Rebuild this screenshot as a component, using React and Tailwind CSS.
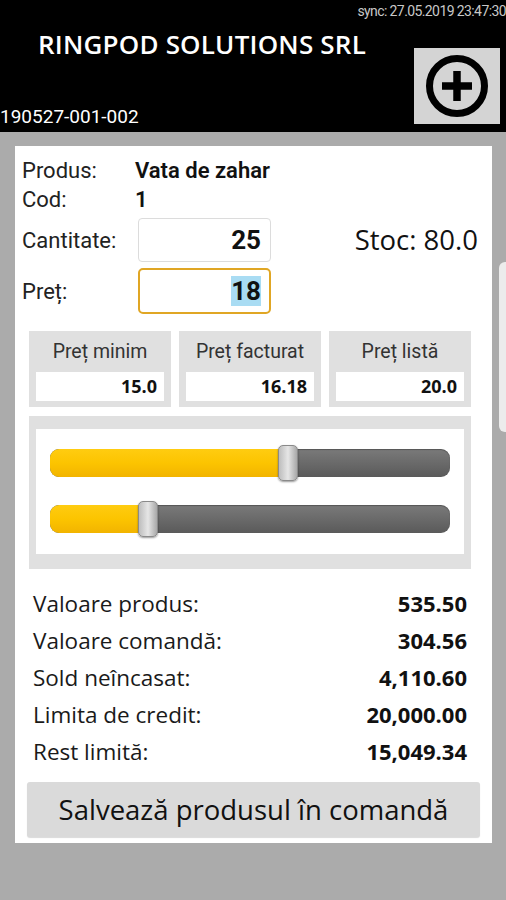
import React from "react";

const roboto = { fontFamily: "Roboto, 'Liberation Sans', sans-serif" };
const open = { fontFamily: "'Open Sans', sans-serif" };

function Slider({ pct }) {
  return (
    <div className="relative h-[28px] w-[400px]">
      <div className="absolute inset-0 rounded-[9px] bg-gradient-to-b from-[#7a7a7a] via-[#6a6a6a] to-[#5a5a5a] shadow-[inset_0_1px_1px_rgba(0,0,0,0.3)]" />
      <div
        className="absolute left-0 top-0 bottom-0 rounded-l-[9px] bg-gradient-to-b from-[#ffcc10] via-[#fcc400] to-[#f2b400]"
        style={{ width: `${pct}px` }}
      />
      <div
        className="absolute top-[-4px] h-[36px] w-[20px] rounded-[5px] border border-[#8a8a8a] bg-gradient-to-r from-[#bdbdbd] via-[#e6e6e6] to-[#a8a8a8] shadow-[0_1px_2px_rgba(0,0,0,0.4)]"
        style={{ left: `${pct - 10}px` }}
      />
    </div>
  );
}

function PriceBox({ label, value }) {
  return (
    <div className="flex h-[76px] w-[142px] flex-col items-center bg-[#e0e0e0] px-[7px] pt-[9px]">
      <div className="text-[19.5px] leading-[24px] text-[#333]" style={roboto}>{label}</div>
      <div className="mt-[8px] flex h-[29px] w-full items-center justify-end bg-white pr-[7px] text-[18px] font-bold text-[#111]" style={open}>
        {value}
      </div>
    </div>
  );
}

function Row({ label, value }) {
  return (
    <div className="flex h-[37px] items-center justify-between" style={open}>
      <span className="text-[22.5px] text-[#1a1a1a]">{label}</span>
      <span className="text-[22px] font-bold text-[#111]">{value}</span>
    </div>
  );
}

export default function App() {
  return (
    <div className="relative h-[900px] w-[506px] overflow-hidden bg-[#ababab]">
      {/* header */}
      <div className="relative h-[132px] bg-black">
        <div className="flex justify-end pt-[3px] text-[14px] leading-[17px] tracking-[-0.6px] text-[#c8c8c8]" style={roboto}>
          sync: 27.05.2019 23:47:30
        </div>
        <div className="flex">
          <div className="flex flex-1 flex-col">
            <div className="pl-[38px] pt-[7px] text-[26px] font-semibold leading-[34px] tracking-[0.2px] text-white" style={open}>
              RINGPOD SOLUTIONS SRL
            </div>
            <div className="pt-[44px] text-[19px] leading-[24px] text-white" style={roboto}>
              190527-001-002
            </div>
          </div>
          <div className="mr-[6px] mt-[28px] flex h-[76px] w-[86px] items-center justify-center bg-[#d4d4d4]">
            <svg width="64" height="64" viewBox="0 0 64 64">
              <circle cx="32" cy="32" r="27.5" fill="none" stroke="#000" strokeWidth="7" />
              <path d="M32 17 V47 M17 32 H47" stroke="#000" strokeWidth="7.5" />
            </svg>
          </div>
        </div>
      </div>

      {/* side partial element */}
      <div className="absolute left-[499px] top-[262px] h-[170px] w-[20px] rounded-[6px] bg-[#ececec]" />

      {/* card */}
      <div className="ml-[15px] mt-[14px] flex h-[697px] w-[477px] flex-col bg-white">
        <div className="px-[7px] pt-[10px]" style={roboto}>
          <div className="flex h-[28px] items-center text-[22px] text-[#222]">
            <span className="w-[113px]">Produs:</span>
            <span className="font-semibold text-[#111]">Vata de zahar</span>
          </div>
          <div className="flex h-[30px] items-center text-[22px] text-[#222]">
            <span className="w-[113px]">Cod:</span>
            <span className="font-semibold text-[#111]">1</span>
          </div>
          <div className="mt-[4px] flex h-[44px] items-center text-[22px] text-[#222]">
            <span className="w-[116px]">Cantitate:</span>
            <div className="flex h-[44px] w-[133px] items-center justify-end rounded-[4px] border border-[#dcdcdc] pr-[9px] text-[26px] font-bold text-[#111]">
              25
            </div>
            <span className="ml-auto mr-[7px] text-[27.5px] text-[#111]" style={open}>Stoc: 80.0</span>
          </div>
          <div className="mt-[6px] flex h-[46px] items-center text-[22px] text-[#222]">
            <span className="w-[116px]">Preț:</span>
            <div className="flex h-[46px] w-[133px] items-center justify-end rounded-[5px] border-2 border-[#e0a624] pr-[8px] text-[26px] font-bold text-[#111]">
              <span className="bg-[#a9dcf3] leading-[30px]">18</span>
            </div>
          </div>
        </div>

        <div className="ml-[14px] mr-[21px] mt-[17px] flex gap-[8px]">
          <PriceBox label="Preț minim" value="15.0" />
          <PriceBox label="Preț facturat" value="16.18" />
          <PriceBox label="Preț listă" value="20.0" />
        </div>

        <div className="ml-[14px] mr-[21px] mt-[9px] h-[153px] bg-[#e0e0e0] px-[7px] pt-[13px]">
          <div className="flex h-[125px] flex-col items-center gap-[28px] bg-white pt-[20px]">
            <Slider pct={238} />
            <Slider pct={98} />
          </div>
        </div>

        <div className="ml-[18px] mr-[25px] mt-[16px] flex flex-col">
          <Row label="Valoare produs:" value="535.50" />
          <Row label="Valoare comandă:" value="304.56" />
          <Row label="Sold neîncasat:" value="4,110.60" />
          <Row label="Limita de credit:" value="20,000.00" />
          <Row label="Rest limită:" value="15,049.34" />
        </div>

        <div className="mx-[12px] mt-[12px] flex h-[55px] items-center justify-center rounded-[3px] bg-[#dadada] shadow-[0_1px_1px_rgba(0,0,0,0.15)] text-[27.5px] text-[#111]" style={open}>
          Salvează produsul în comandă
        </div>
      </div>
    </div>
  );
}
